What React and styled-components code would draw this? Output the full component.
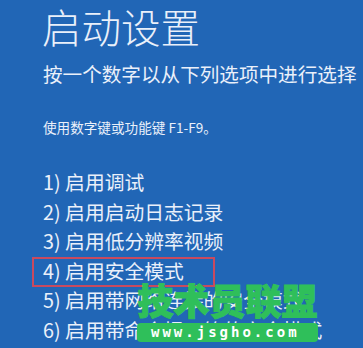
import React from "react";
import styled, { createGlobalStyle } from "styled-components";

const Global = createGlobalStyle`
  html, body { margin: 0; padding: 0; background: #2166b6; }
  body { font-family: "Noto Sans CJK SC", "Noto Sans", sans-serif; }
`;

const items = [
  "1) 启用调试",
  "2) 启用启动日志记录",
  "3) 启用低分辨率视频",
  "4) 启用安全模式",
  "5) 启用带网络连接的安全模式",
  "6) 启用带命令提示符的安全模式",
];

export default function App() {
  return (
    <>
      <Global />
      <Screen>
        <Title>启动设置</Title>
        <Subtitle>按一个数字以从下列选项中进行选择</Subtitle>
        <Hint>使用数字键或功能键 F1-F9。</Hint>
        <List>
          {items.map((t, i) => (
            <Item key={i} $highlighted={i === 3}>{t}</Item>
          ))}
        </List>
        <Watermark>
          <MarkName>技术员联盟</MarkName>
          <MarkUrl>www.jsgho.com</MarkUrl>
        </Watermark>
      </Screen>
    </>
  );
}

const Screen = styled.div`
  position: relative;
  width: 363px;
  height: 348px;
  overflow: hidden;
  box-sizing: border-box;
  padding: 2px 0 0 43px;
  background: #2166b6;
  color: #eaf0fa;
  white-space: nowrap;
`;

const Title = styled.h1`
  margin: 0 0 0 -1px;
  font-size: 39.5px;
  font-weight: 300;
  line-height: 48px;
`;

const Subtitle = styled.div`
  margin-top: 10px;
  font-size: 19.6px;
  line-height: 28px;
  font-weight: 400;
`;

const Hint = styled.div`
  margin-top: 29px;
  font-size: 13.6px;
  line-height: 20px;
`;

const List = styled.ul`
  margin: 30px 0 0;
  padding: 0;
  list-style: none;
`;

const Item = styled.li`
  position: relative;
  width: fit-content;
  font-size: 19.8px;
  line-height: 29.5px;
  font-weight: 400;
  ${(p) =>
    p.$highlighted &&
    `
    &::after {
      content: "";
      position: absolute;
      top: 1px;
      bottom: -2px;
      left: -11px;
      right: -31px;
      border: 2px solid #c84a5f;
    }
  `}
`;

const Watermark = styled.div`
  position: absolute;
  left: 137px;
  top: 279px;
  width: 181px;
  display: flex;
  flex-direction: column;
  align-items: stretch;
`;

const MarkName = styled.div`
  font-family: "Noto Sans CJK SC", sans-serif;
  font-weight: 900;
  font-size: 36px;
  line-height: 40px;
  color: #2fbf5a;
  text-align: center;
  -webkit-text-stroke: 1px #2fbf5a;
`;

const MarkUrl = styled.div`
  margin-top: 4px;
  height: 19px;
  border-radius: 4px;
  background: #2fbf5a;
  color: #ffffff;
  font-family: "DejaVu Sans Mono", monospace;
  font-weight: bold;
  font-size: 14px;
  line-height: 19px;
  letter-spacing: 3px;
  padding-left: 14px;
`;
